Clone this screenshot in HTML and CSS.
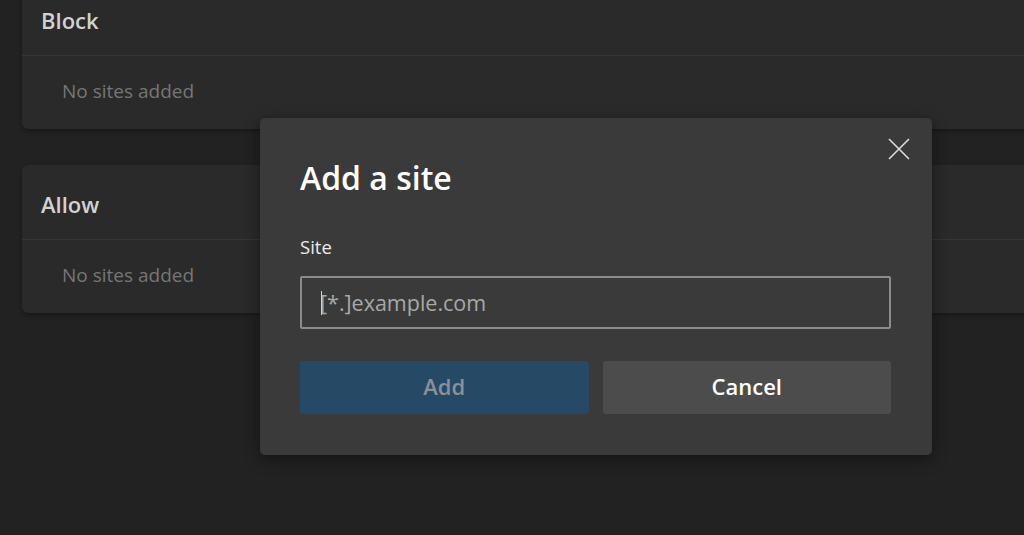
FILE: index.html
```html
<!DOCTYPE html>
<html lang="en">
<head>
    <meta charset="UTF-8">
    <meta name="viewport" content="width=device-width, initial-scale=1.0">
    <title>Site permissions</title>
    <link rel="stylesheet" href="styles.css">
</head>
<body>
    <div class="lists">
        <div class="card">
            <div class="card-header">Block</div>
            <div class="card-body">No sites added</div>
        </div>
        <div class="card">
            <div class="card-header">Allow</div>
            <div class="card-body">No sites added</div>
        </div>
    </div>

    <div class="dialog">
        <button class="close-btn" aria-label="Close">
            <svg width="22" height="22" viewBox="0 0 22 22">
                <path d="M1 1 L21 21 M21 1 L1 21" stroke="#dcdcdc" stroke-width="1.6" fill="none"/>
            </svg>
        </button>
        <h1 class="dialog-title">Add a site</h1>
        <label class="field-label" for="site">Site</label>
        <div class="site-input">
            <span class="caret"></span>
            <input type="text" id="site" placeholder="[*.]example.com">
        </div>
        <div class="dialog-actions">
            <button class="btn btn-add" disabled>Add</button>
            <button class="btn btn-cancel">Cancel</button>
        </div>
    </div>
</body>
</html>
```

FILE: styles.css
```css
html, body {
    height: 100%;
}
body {
    margin: 0;
    background-color: #222222;
    font-family: 'Open Sans', 'Noto Sans', sans-serif;
    overflow: hidden;
    position: relative;
}
.lists {
    margin-top: -19px;
    padding-left: 22px;
    margin-right: -40px;
}
.card {
    background-color: #2a2a2a;
    border-radius: 6px;
    box-shadow: 0 2px 4px rgba(0, 0, 0, 0.35);
    margin-bottom: 36px;
}
.card-header {
    padding: 26px 19px 22px 19px;
    font-size: 22px;
    line-height: 26px;
    font-weight: 600;
    color: #d2d2d2;
    border-bottom: 1px solid #353535;
}
.card-body {
    height: 73px;
    padding-left: 40px;
    padding-bottom: 3px;
    box-sizing: border-box;
    display: flex;
    align-items: center;
    font-size: 19px;
    color: #767676;
}
.dialog {
    position: absolute;
    left: 260px;
    top: 118px;
    width: 672px;
    box-sizing: border-box;
    padding: 42px 41px 41px 40px;
    background-color: #3a3a3a;
    border-radius: 5px;
    box-shadow: 0 4px 16px rgba(0, 0, 0, 0.45);
}
.close-btn {
    position: absolute;
    top: 20px;
    right: 22px;
    width: 22px;
    height: 22px;
    padding: 0;
    border: none;
    background: none;
    cursor: pointer;
}
.close-btn svg {
    display: block;
}
.dialog-title {
    margin: 0 0 40px 0;
    font-size: 32px;
    line-height: 36px;
    font-weight: 600;
    color: #ffffff;
}
.field-label {
    display: block;
    margin-bottom: 18px;
    font-size: 18.5px;
    line-height: 22px;
    color: #ececec;
}
.site-input {
    position: relative;
    height: 53px;
    box-sizing: border-box;
    border: 2px solid #8c8c8c;
    border-radius: 2px;
    margin-bottom: 32px;
}
.site-input input {
    width: 100%;
    height: 100%;
    box-sizing: border-box;
    border: none;
    outline: none;
    background: transparent;
    padding: 0 0 0 18px;
    font-family: inherit;
    font-size: 21.5px;
    color: #ffffff;
}
.site-input input::placeholder {
    color: #a8a8a8;
}
.caret {
    position: absolute;
    left: 19px;
    top: 13px;
    width: 1px;
    height: 24px;
    background-color: #cfcfcf;
}
.dialog-actions {
    display: flex;
    gap: 14px;
}
.btn {
    flex: 1;
    height: 53px;
    padding: 0 0 3px 0;
    border: none;
    border-radius: 3px;
    font-family: inherit;
    font-size: 22px;
    font-weight: 600;
}
.btn-add {
    background-color: #264a66;
    color: #8a9098;
}
.btn-cancel {
    background-color: #4c4c4c;
    color: #ffffff;
    cursor: pointer;
}
.btn-cancel:hover {
    background-color: #555555;
}
```
